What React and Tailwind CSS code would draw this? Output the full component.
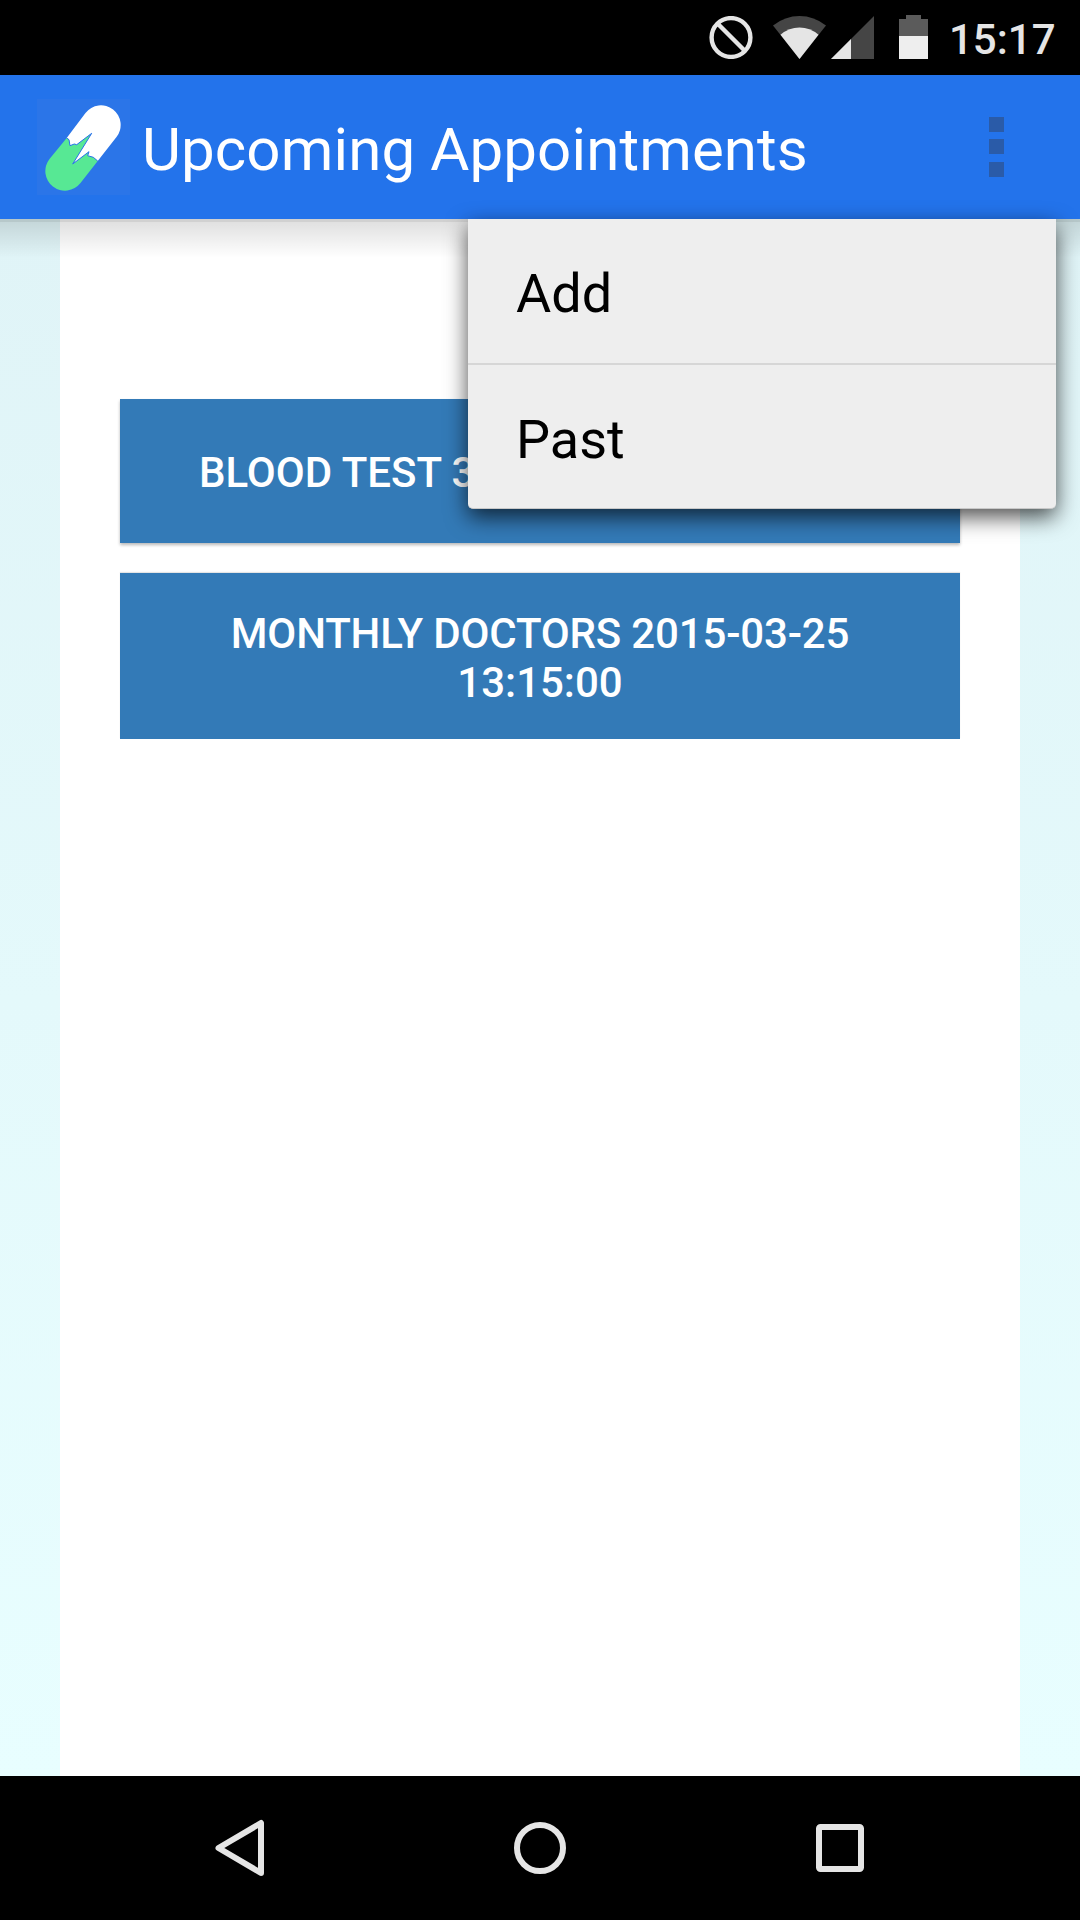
const APPOINTMENT_BUTTON =
  "w-full bg-[#337ab7] text-white font-medium text-[42px] leading-[49px] uppercase";

function StatusBar() {
  return (
    <div className="h-[75px] shrink-0 bg-black flex items-start pl-[709px]">
      <svg className="mt-[16px] w-[44px] h-[43px] shrink-0" viewBox="0 0 44 43" fill="none" stroke="#e5e5e5">
        <circle cx="22" cy="21.5" r="19.4" strokeWidth="4.4" />
        <path d="M8.5 7.5 35.5 34.5" strokeWidth="4.4" />
      </svg>
      <svg className="mt-[16px] ml-[20px] w-[53px] h-[43px] shrink-0" viewBox="0 0 53 43">
        <path d="M0 9.5Q12 0 26.5 0T53 9.5L26.5 43Z" fill="#454545" />
        <path d="M7.5 18.8Q16 11.6 26.5 11.6T45.5 18.8L26.5 43Z" fill="#e5e5e5" />
      </svg>
      <svg className="mt-[16px] ml-[5px] w-[43px] h-[43px] shrink-0" viewBox="0 0 43 43">
        <path d="M0 43 43 0V43Z" fill="#454545" />
        <path d="M0 43 20 23V43Z" fill="#e5e5e5" />
      </svg>
      <svg className="mt-[15px] ml-[25px] w-[29px] h-[44px] shrink-0" viewBox="0 0 29 44">
        <path d="M7 0H22V4H29V44H0V4H7Z" fill="#5b5b5b" />
        <path d="M0 21H29V44H0Z" fill="#eeeeee" />
      </svg>
      <span className="mt-[15px] ml-[21px] text-[42px] leading-[50px] font-medium text-[#e5e5e5]">15:17</span>
    </div>
  );
}

function PillIcon() {
  return (
    <svg className="w-[93px] h-[96px] shrink-0" viewBox="0 0 93 96">
      <rect width="93" height="96" fill="#2b75e8" />
      <path
        d="M29.7 39 12.5 59.9A19.6 19.6 0 0 0 43.5 84.1L60.7 62 56.3 58.3 50.7 56.7 52 52.7 35.7 65 54.7 34.3 39.7 45.7 37.3 45 33 46.7 32 40.7Z"
        fill="#57e894"
      />
      <path
        d="M29.7 39 48.5 13.9A19.6 19.6 0 0 1 79.5 38.1L60.7 62 56.3 58.3 50.7 56.7 52 52.7 35.7 65 54.7 34.3 39.7 45.7 37.3 45 33 46.7 32 40.7Z"
        fill="#fff"
      />
      <path
        d="M29.7 39 32 40.7 33 46.7 37.3 45 39.7 45.7 54.7 34.3 35.7 65 52 52.7 50.7 56.7 56.3 58.3 60.7 62"
        fill="none"
        stroke="#2b75e8"
      />
    </svg>
  );
}

function AppBar() {
  return (
    <header className="h-[144px] shrink-0 bg-[#2373eb] flex items-center pl-[37px] pr-[76px]">
      <PillIcon />
      <h1 className="mt-[5px] ml-[12px] text-[60px] leading-[70px] tracking-[0.12px] text-white whitespace-nowrap">
        Upcoming Appointments
      </h1>
      <div className="ml-auto w-[15px] flex flex-col">
        <i className="h-[15px] bg-[#2a5ba8]" />
        <i className="mt-[7px] h-[15px] bg-[#2a5ba8]" />
        <i className="mt-[8px] h-[15px] bg-[#2a5ba8]" />
      </div>
    </header>
  );
}

function OverflowMenu() {
  return (
    <div className="absolute top-[219px] left-[468px] w-[588px] h-[290px] bg-[#eeeeee] rounded-b-[5px] border-b border-[#c8c8c8] text-[54px] leading-[64px] text-black shadow-[0_8px_22px_rgba(0,0,0,0.7)]">
      <div className="h-[146px] border-b-2 border-[#d6d6d6] pl-[48px] pt-[43px]">Add</div>
      <div className="pl-[48px] pt-[43px]">Past</div>
    </div>
  );
}

function NavBar() {
  return (
    <nav className="h-[144px] shrink-0 bg-black flex items-center justify-between px-[210px]">
      <svg className="w-[60px] h-[60px]" viewBox="0 0 60 60" fill="none" stroke="#e5e5e5" strokeWidth="6" strokeLinejoin="round">
        <path d="M51 5V55L8.5 30Z" />
      </svg>
      <svg className="w-[60px] h-[60px]" viewBox="0 0 60 60" fill="none" stroke="#e5e5e5" strokeWidth="6">
        <circle cx="30" cy="30" r="23" />
      </svg>
      <svg className="w-[60px] h-[60px]" viewBox="0 0 60 60" fill="none" stroke="#e5e5e5" strokeWidth="6">
        <rect x="9" y="9" width="42" height="42" rx="1.5" />
      </svg>
    </nav>
  );
}

export default function App() {
  return (
    <div className="relative w-[1080px] h-[1920px] overflow-hidden flex flex-col font-['Roboto',sans-serif]">
      <StatusBar />
      <AppBar />
      <main className="relative flex-1 px-[60px] bg-linear-to-b from-[#e0f4f7] to-[#e8feff]">
        <div className="h-full bg-white px-[60px] pt-[180px] flex flex-col gap-[30px]">
          <button
            className={`${APPOINTMENT_BUTTON} h-[144px] pl-[79px] pt-[2px] text-left shadow-[0_2px_3px_rgba(0,0,0,0.28)]`}
          >
            Blood Test 3
          </button>
          <button
            className={`${APPOINTMENT_BUTTON} h-[166px] px-[48px] pt-[4px] shadow-[0_-1px_1px_rgba(0,0,0,0.1)]`}
          >
            <span className="tracking-[-0.17px]">Monthly Doctors 2015-03-25</span> 13:15:00
          </button>
        </div>
        <div className="absolute inset-x-0 top-0">
          <div className="h-[3px] bg-black/18" />
          <div className="h-[36px] bg-linear-to-b from-black/12 to-transparent" />
        </div>
      </main>
      <NavBar />
      <OverflowMenu />
    </div>
  );
}
